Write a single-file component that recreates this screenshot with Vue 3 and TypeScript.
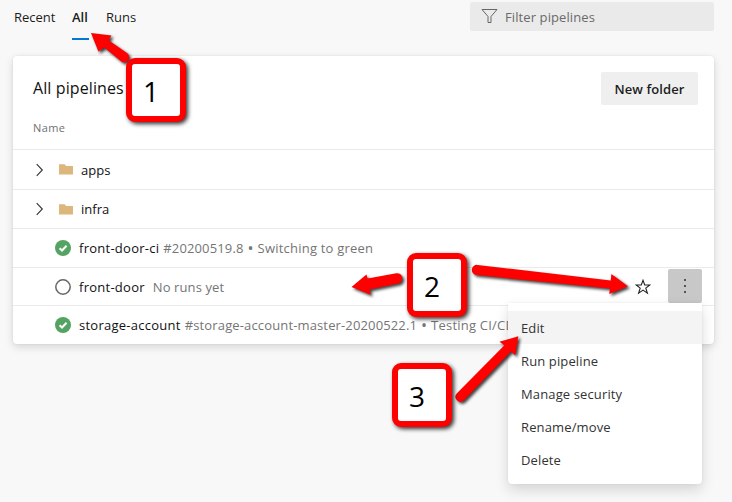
<script setup lang="ts">
interface Row {
  kind: 'folder' | 'pipeline'
  name: string
  status?: 'success' | 'none'
  run?: string
  message?: string
  active?: boolean
}

interface Callout {
  label: string
  place: string
}

const tabs: { label: string; key: string; selected: boolean }[] = [
  { label: 'Recent', key: 'recent', selected: false },
  { label: 'All', key: 'all', selected: true },
  { label: 'Runs', key: 'runs', selected: false },
]

const rows: Row[] = [
  { kind: 'folder', name: 'apps' },
  { kind: 'folder', name: 'infra' },
  { kind: 'pipeline', name: 'front-door-ci', status: 'success', run: '#20200519.8', message: 'Switching to green' },
  { kind: 'pipeline', name: 'front-door', status: 'none', message: 'No runs yet', active: true },
  {
    kind: 'pipeline',
    name: 'storage-account',
    status: 'success',
    run: '#storage-account-master-20200522.1',
    message: 'Testing CI/CD',
  },
]

const menu: string[] = ['Edit', 'Run pipeline', 'Manage security', 'Rename/move', 'Delete']

const callouts: Callout[] = [
  { label: '1', place: 'at-tabs' },
  { label: '2', place: 'at-row' },
  { label: '3', place: 'at-menu' },
]

const arrows: string[] = [
  'M91 33 L111.5 35.5 L108.6 40.2 L126.6 52.8 A5 5 0 0 1 121.6 61.8 L104.4 47.4 L98.4 51.6 Z',
  'M351.5 287 L366.4 274.4 L367.7 278.6 L396.3 273.2 A5.2 5.2 0 0 1 398.3 283.4 L369.4 289.6 L370.8 294.8 Z',
  'M628 286.2 L611.4 274 L610.7 280.4 L477.4 264.9 A5 5 0 0 0 476.4 275 L609.8 288.6 L609.3 294 Z',
  'M518.3 336.3 L499.4 341.8 L504.4 345.2 L456.7 393.4 A5 5 0 0 0 463.7 400.5 L511.2 351.2 L515.2 355.6 Z',
]
</script>

<template>
  <div class="page">
    <header class="topbar">
      <nav class="tabs">
        <a v-for="t in tabs" :key="t.key" class="tab" :class="[t.key, { selected: t.selected }]">{{ t.label }}</a>
      </nav>
      <div class="filter">
        <svg class="funnel" width="17" height="16" viewBox="0 0 17 16">
          <path d="M1 1.5 H16 L10 8.5 V14.5 H7 V8.5 Z" />
        </svg>
        <span>Filter pipelines</span>
      </div>
    </header>

    <main class="card">
      <div class="card-head">
        <h1>All pipelines</h1>
        <button class="new-folder" type="button">New folder</button>
      </div>
      <div class="column">Name</div>

      <div v-for="r in rows" :key="r.name" class="row" :class="r.kind">
        <template v-if="r.kind === 'folder'">
          <svg class="chevron" width="8" height="14" viewBox="0 0 8 14"><path d="M.7 1.2 L6.3 7 L.7 12.8" /></svg>
          <svg class="folder-icon" width="14" height="11" viewBox="0 0 14 11">
            <path d="M0 .3 H5.6 L7.2 2 H14 V10.5 H0 Z" />
          </svg>
        </template>
        <svg v-else-if="r.status === 'success'" class="status" width="16" height="16" viewBox="0 0 16 16">
          <circle cx="8" cy="8" r="8" fill="#55a362" />
          <path d="M4.6 8.2 L7 10.5 L11.6 5.8" fill="none" stroke="#fff" stroke-width="2" />
        </svg>
        <svg v-else class="status" width="16" height="16" viewBox="0 0 16 16">
          <circle cx="8" cy="8" r="7.2" fill="none" stroke="#666" stroke-width="1.5" />
        </svg>
        <span class="name" :class="r.name">{{ r.name }}</span>
        <span v-if="r.run" class="run">{{ r.run }}</span>
        <span v-if="r.run" class="dot">•</span>
        <span v-if="r.message" class="message">{{ r.message }}</span>
        <div v-if="r.active" class="actions">
          <svg class="star" width="16" height="16" viewBox="0 0 16 16">
            <path d="M8 1.3 L9.7 6 H14.8 L10.8 9.1 L12.4 14.2 L8 11.1 L3.6 14.2 L5.2 9.1 L1.2 6 H6.3 Z" />
          </svg>
          <div class="more">
            <svg width="4" height="16" viewBox="0 0 4 16">
              <path d="M1 1h2v2H1z M1 7h2v2H1z M1 13h2v2H1z" />
            </svg>
          </div>
        </div>
      </div>
    </main>

    <div class="menu">
      <div v-for="(m, i) in menu" :key="m" class="item" :class="{ hovered: i === 0 }">{{ m }}</div>
    </div>

    <svg class="arrows" width="732" height="502" viewBox="0 0 732 502">
      <path v-for="a in arrows" :key="a" :d="a" />
    </svg>
    <div v-for="c in callouts" :key="c.label" class="callout" :class="c.place">{{ c.label }}</div>
  </div>
</template>

<style>
body {
  margin: 0;
}
</style>

<style scoped>
.page {
  position: relative;
  box-sizing: border-box;
  width: 732px;
  height: 502px;
  overflow: hidden;
  padding: 2px 18px 0 13px;
  background: #f8f8f8;
  color: #1c1c1c;
  font: 13px/18px 'Open Sans', 'Noto Sans', sans-serif;
}
.topbar {
  display: flex;
  justify-content: space-between;
  height: 54px;
}
.tabs {
  display: flex;
  gap: 17px;
  padding-left: 1px;
}
.tab {
  box-sizing: border-box;
  height: 38px;
  padding-top: 6px;
  white-space: nowrap;
}
.tab.recent {
  width: 41px;
}
.tab.all {
  width: 17px;
}
.tab.selected {
  border-bottom: 2px solid #0078d4;
  font-weight: 600;
}
.filter {
  box-sizing: border-box;
  display: flex;
  align-items: center;
  gap: 7px;
  width: 244px;
  height: 29px;
  padding: 1px 0 0 11px;
  border-radius: 2px;
  background: #eaeaea;
  color: #6a6a6a;
  letter-spacing: 0.1px;
}
.funnel {
  margin-top: -3px;
}
.funnel path {
  fill: none;
  stroke: #666;
}
.card {
  height: 288px;
  border-radius: 4px;
  background: #fff;
  box-shadow: 0 3px 8px rgba(0, 0, 0, 0.14), 0 0 2px rgba(0, 0, 0, 0.09);
}
.card-head {
  display: flex;
  align-items: center;
  justify-content: space-between;
  padding: 16px 16px 0 20px;
}
h1 {
  margin: -2px 0 0;
  color: #111;
  font-size: 16px;
  font-weight: 400;
  line-height: 24px;
  letter-spacing: 0.1px;
}
.new-folder {
  width: 97px;
  height: 33px;
  padding: 0;
  border: 0;
  border-radius: 2px;
  background: #efefef;
  color: #1c1c1c;
  font: 600 13px/18px 'Open Sans', 'Noto Sans', sans-serif;
  letter-spacing: 0.1px;
}
.column {
  height: 30px;
  padding: 14px 0 0 20px;
  color: #707070;
  font-size: 11px;
  letter-spacing: 0.4px;
}
.row {
  box-sizing: border-box;
  display: flex;
  align-items: center;
  height: 39px;
  border-top: 1px solid #eaeaea;
  padding-left: 42px;
  white-space: nowrap;
}
.row.folder {
  padding-left: 23px;
}
.column + .row {
  height: 40px;
}
.row:nth-last-child(2) {
  height: 38px;
}
.chevron {
  margin-right: 15px;
}
.chevron path {
  fill: none;
  stroke: #333;
  stroke-width: 1.1;
}
.folder-icon {
  margin-right: 8px;
}
.folder-icon path {
  fill: #dcb67a;
}
.status {
  margin-right: 8px;
}
.name {
  color: #111;
}
.pipeline .name {
  letter-spacing: 0.26px;
}
.run,
.dot,
.message {
  color: #757575;
}
.run {
  margin-left: 4px;
  letter-spacing: 0.14px;
}
.dot {
  width: 6px;
  margin: 0 4px;
  font-size: 16px;
}
.message {
  letter-spacing: 0.22px;
}
.front-door + .message {
  margin-left: 8px;
  letter-spacing: 0.1px;
}
.actions {
  display: flex;
  align-items: center;
  margin-left: auto;
  padding-right: 12px;
}
.star {
  margin-right: 17px;
}
.star path {
  fill: none;
  stroke: #222;
  stroke-width: 1.1;
}
.more {
  display: flex;
  align-items: center;
  justify-content: center;
  width: 34px;
  height: 34px;
  margin-top: -2px;
  border-radius: 2px;
  background: #c8c8c8;
}
.more path {
  fill: #555;
}
.menu {
  position: absolute;
  left: 508px;
  top: 303px;
  box-sizing: border-box;
  width: 194px;
  height: 181px;
  padding-top: 8px;
  border-radius: 0 0 4px 4px;
  background: #fff;
  box-shadow: 0 6px 14px rgba(0, 0, 0, 0.14), 0 0 3px rgba(0, 0, 0, 0.06);
}
.item {
  height: 33px;
  padding-left: 13px;
  color: #333;
  line-height: 34px;
  letter-spacing: 0.13px;
}
.item.hovered {
  background: #f4f4f4;
}
.arrows {
  position: absolute;
  left: 0;
  top: 0;
  filter: drop-shadow(2px 2px 1.5px rgba(0, 0, 0, 0.75));
}
.arrows path {
  fill: #fe0000;
}
.callout {
  position: absolute;
  box-sizing: border-box;
  width: 60px;
  height: 64px;
  border: 6px solid #fe0000;
  border-radius: 9px;
  padding-left: 11px;
  background: #fff;
  box-shadow: 2px 2px 4px rgba(0, 0, 0, 0.8);
  color: #000;
  font-size: 28px;
  line-height: 54px;
}
.at-tabs {
  left: 126px;
  top: 58px;
}
.at-row {
  left: 407px;
  top: 253px;
}
.at-menu {
  left: 392px;
  top: 363px;
}
</style>
